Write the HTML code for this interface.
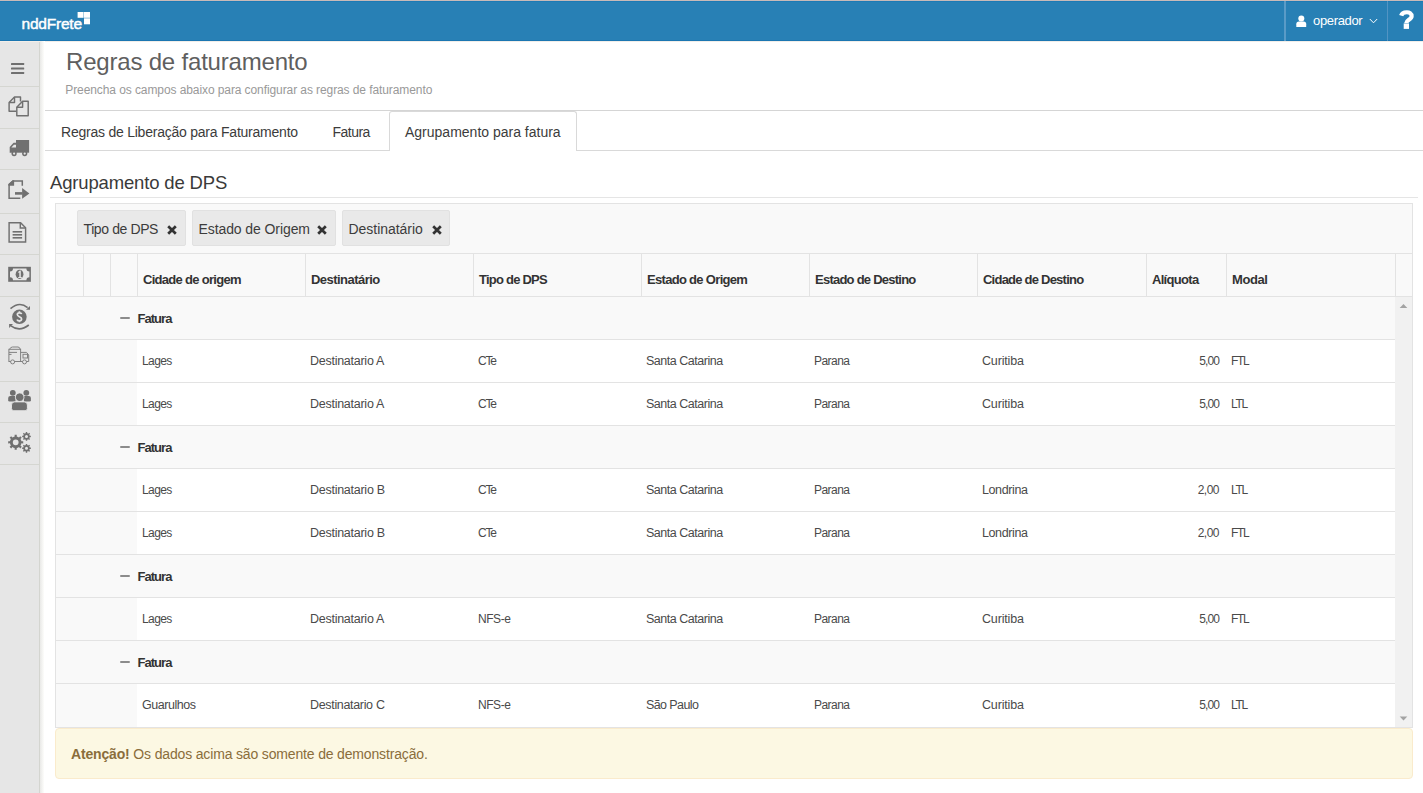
<!DOCTYPE html>
<html><head><meta charset="utf-8"><title>Regras de faturamento</title>
<style>
html,body{margin:0;padding:0;}
body{width:1423px;height:793px;overflow:hidden;position:relative;background:#fff;font-family:"Liberation Sans", sans-serif;}
</style></head><body>
<div style="position:absolute;left:0px;top:0px;width:1423px;height:1px;background:#c8bab8;"></div>
<div style="position:absolute;left:0px;top:1px;width:1423px;height:40px;background:#2880b5;"></div>
<div style="position:absolute;left:0px;top:1px;width:1423px;height:1px;background:#1c7ab5;"></div>
<div style="position:absolute;left:0px;top:40px;width:1423px;height:1px;background:#1b76b1;"></div>
<div style="position:absolute;left:1284px;top:1px;width:2px;height:40px;background:#5a9bc7;"></div>
<div style="position:absolute;left:1387px;top:1px;width:1px;height:40px;background:#5294c3;"></div>
<div style="position:absolute;left:21.5px;top:15.98px;font-size:15.5px;line-height:15.5px;font-weight:normal;color:#fff;letter-spacing:-0.22px;white-space:nowrap;-webkit-text-stroke:0.45px #fff;">nddFrete</div>
<svg style="position:absolute;left:0;top:0" width="1423" height="41" viewBox="0 0 1423 41">
<rect x="77.6" y="12" width="6" height="5.8" fill="#fff"/>
<rect x="84" y="12" width="6" height="5.8" fill="#fff"/>
<rect x="84" y="18.3" width="6" height="6" fill="#fff"/>
<circle cx="1301.3" cy="18.4" r="3" fill="#fff"/>
<path d="M1296.3,27.1 L1296.3,24.3 Q1296.3,21.6 1299,21.6 L1303.6,21.6 Q1306.2,21.6 1306.2,24.3 L1306.2,27.1 Z" fill="#fff"/>
<polyline points="1369.8,19 1373.5,22.8 1377.2,19" fill="none" stroke="#fff" stroke-width="1"/>
<path d="M1401.2,15.6 C1402.3,11.5 1411.6,10.6 1411.6,16.2 C1411.6,19.6 1406.3,19.8 1406.3,23" fill="none" stroke="#fff" stroke-width="4.2"/>
<rect x="1403.7" y="23.4" width="5.3" height="5.5" fill="#fff"/>
</svg>
<div style="position:absolute;left:1313px;top:14.00px;font-size:13px;line-height:13px;font-weight:normal;color:#fff;letter-spacing:-0.34px;white-space:nowrap;">operador</div>
<div style="position:absolute;left:0px;top:41px;width:39px;height:752px;background:#e6e6e6;"></div>
<div style="position:absolute;left:39px;top:41px;width:1px;height:752px;background:#d4d5d0;"></div>
<div style="position:absolute;left:40px;top:41px;width:4px;height:752px;background:linear-gradient(to right,#e9e9e7,#fdfdfb)"></div>
<div style="position:absolute;left:0px;top:86px;width:39px;height:1px;background:#d5d6d1;"></div>
<div style="position:absolute;left:0px;top:128px;width:39px;height:1px;background:#d5d6d1;"></div>
<div style="position:absolute;left:0px;top:169px;width:39px;height:1px;background:#d5d6d1;"></div>
<div style="position:absolute;left:0px;top:213px;width:39px;height:1px;background:#d5d6d1;"></div>
<div style="position:absolute;left:0px;top:254px;width:39px;height:1px;background:#d5d6d1;"></div>
<div style="position:absolute;left:0px;top:296px;width:39px;height:1px;background:#d5d6d1;"></div>
<div style="position:absolute;left:0px;top:338px;width:39px;height:1px;background:#d5d6d1;"></div>
<div style="position:absolute;left:0px;top:381px;width:39px;height:1px;background:#d5d6d1;"></div>
<div style="position:absolute;left:0px;top:422px;width:39px;height:1px;background:#d5d6d1;"></div>
<div style="position:absolute;left:0px;top:464px;width:39px;height:1px;background:#d5d6d1;"></div>
<div style="position:absolute;left:0px;top:41px;width:40px;height:1px;background:#f2eee9;"></div>
<div style="position:absolute;left:45px;top:41px;width:1378px;height:1px;background:#f2eee9;"></div>
<svg style="position:absolute;left:0;top:0" width="40" height="793" viewBox="0 0 40 793">
<g fill="#707070">
<rect x="11" y="63" width="13.2" height="2" rx="0.6"/>
<rect x="11" y="67.5" width="13.2" height="2" rx="0.6"/>
<rect x="11" y="72" width="13.2" height="2" rx="0.6"/>
</g>
<g fill="none" stroke="#707070" stroke-width="1.45" stroke-linejoin="round">
<path d="M16.5,111.3 L9.1,111.3 L9.1,102.5 L14.5,96.9 L20.5,96.9 L20.5,101.5"/>
<path d="M14.5,96.9 L14.5,102.5 L9.1,102.5"/>
<path d="M16.8,107.3 L22.6,101.3 L28.2,101.3 L28.2,115.8 L16.8,115.8 Z" fill="#e6e6e6"/>
<path d="M22.6,101.3 L22.6,107.3 L16.8,107.3"/>
</g>
<g fill="#707070">
<rect x="16" y="140" width="13.1" height="12.7"/>
<path d="M9.7,152.7 L9.7,147 L13.6,142.8 L16.5,142.8 L16.5,152.7 Z"/>
<path d="M11.4,147.4 L13.9,144.7 L16,144.7 L16,147.4 Z" fill="#e6e6e6"/>
<circle cx="14.1" cy="153.6" r="2.6"/>
<circle cx="24.7" cy="153.6" r="2.6"/>
<circle cx="14.1" cy="153.6" r="1.1" fill="#e6e6e6"/>
<circle cx="24.7" cy="153.6" r="1.1" fill="#e6e6e6"/>
</g>
<g fill="none" stroke="#707070" stroke-width="1.5">
<path d="M20.3,198.2 L9.1,198.2 L9.1,184.3 L13.1,180.9 L22.3,180.9 L22.3,185.7"/>
</g>
<g fill="#707070">
<path d="M8.4,185.7 L8.4,184.2 L12.6,180.2 L14.1,180.2 L14.1,185.7 Z"/>
<rect x="15" y="192.1" width="7.5" height="2.6"/>
<path d="M22.1,188.1 L29.4,193.4 L22.1,198.7 Z"/>
</g>
<g fill="none" stroke="#707070" stroke-width="1.45">
<path d="M9.1,222.7 L20.6,222.7 L25.6,227.7 L25.6,242 L9.1,242 Z"/>
<path d="M20.3,222.7 L20.3,228 L25.6,228"/>
</g>
<g fill="#707070">
<rect x="12.6" y="231" width="9.5" height="1.6"/>
<rect x="12.6" y="234" width="9.5" height="1.6"/>
<rect x="12.6" y="237" width="9.5" height="1.6"/>
</g>
<g fill="#707070">
<rect x="8.2" y="266.8" width="22.7" height="15"/>
<path d="M13.0,268.5 L26.4,268.5 A3.0,3.0 0 0 0 29.4,271.5 L29.4,277.3 A3.0,3.0 0 0 0 26.4,280.3 L13.0,280.3 A3.0,3.0 0 0 0 10.0,277.3 L10.0,271.5 A3.0,3.0 0 0 0 13.0,268.5 Z" fill="#e6e6e6"/>
<ellipse cx="19.55" cy="274.3" rx="3.9" ry="4.6"/>
<path d="M18.3,271.8 L19.9,270.6 L20.8,270.6 L20.8,277 L21.8,277 L21.8,278 L18.2,278 L18.2,277 L19.3,277 L19.3,272.6 L18.3,273 Z" fill="#e6e6e6"/>
</g>
<g fill="#707070">
<circle cx="19.4" cy="316.8" r="7.3"/>
<path d="M21.6,314.2 C21.3,312.6 17.3,312.3 17.3,314.6 C17.3,317 21.6,316.4 21.6,319 C21.6,321.4 17.4,321.3 17.1,319.5 M19.4,311.3 L19.4,312.8 M19.4,320.8 L19.4,322.3" fill="none" stroke="#e6e6e6" stroke-width="1.7"/>
<path d="M10.5,308.7 Q19.5,300.9 27.6,307.6" fill="none" stroke="#707070" stroke-width="1.6"/>
<path d="M30,305.9 L30,309.8 L26,309.8 Z"/>
<path d="M28.8,325 Q19.5,332.3 11,325.8" fill="none" stroke="#707070" stroke-width="1.6"/>
<path d="M9.1,324 L13,324 L9.1,327.9 Z"/>
</g>
<g fill="none" stroke="#707070" stroke-width="1" opacity="0.85">
<rect x="8.9" y="349.3" width="11.7" height="12.2"/>
<path d="M9.5,349.3 Q10.5,347 12.5,347 L18,347 Q19.6,347 20.3,349.3"/>
<path d="M9,352.4 L17,352.4 M9,354.4 L11.5,354.4"/>
<path d="M20.6,352.4 L26.5,352.4 L28.7,355 L28.7,361.5 L20.6,361.5"/>
<rect x="23" y="354.3" width="4.5" height="3.7"/>
<circle cx="12.6" cy="361.9" r="2" fill="#e6e6e6"/>
<circle cx="24.5" cy="361.9" r="2" fill="#e6e6e6"/>
</g>
<g fill="#707070">
<circle cx="12.8" cy="392.8" r="2.9"/>
<circle cx="26.3" cy="392.8" r="2.9"/>
<path d="M8.2,400.2 L8.2,398 Q8.2,395.9 10.3,395.9 L15.5,395.9 L15.5,401.6 L9.6,401.6 Q8.2,401.6 8.2,400.2 Z"/>
<path d="M30.9,400.2 L30.9,398 Q30.9,395.9 28.8,395.9 L23.9,395.9 L23.9,401.6 L29.5,401.6 Q30.9,401.6 30.9,400.2 Z"/>
<circle cx="19.7" cy="397.2" r="4.3" stroke="#e6e6e6" stroke-width="0.9"/>
<path d="M11.5,408.4 L11.5,405 Q11.5,401.9 14.5,401.9 L24.4,401.9 Q27.4,401.9 27.4,405 L27.4,408.4 Q27.4,410.7 25.1,410.7 L13.8,410.7 Q11.5,410.7 11.5,408.4 Z" stroke="#e6e6e6" stroke-width="0.9"/>
</g>
<g fill="#707070" fill-rule="evenodd">
<path d="M21.06,440.08 L21.41,441.26 L23.22,441.21 L23.22,443.39 L21.41,443.34 L21.06,444.52 L20.47,445.60 L21.79,446.85 L20.25,448.39 L19.00,447.07 L17.92,447.66 L16.74,448.01 L16.79,449.82 L14.61,449.82 L14.66,448.01 L13.48,447.66 L12.40,447.07 L11.15,448.39 L9.61,446.85 L10.93,445.60 L10.34,444.52 L9.99,443.34 L8.18,443.39 L8.18,441.21 L9.99,441.26 L10.34,440.08 L10.93,439.00 L9.61,437.75 L11.15,436.21 L12.40,437.53 L13.48,436.94 L14.66,436.59 L14.61,434.78 L16.79,434.78 L16.74,436.59 L17.92,436.94 L19.00,437.53 L20.25,436.21 L21.79,437.75 L20.47,439.00 Z M18.6,442.3 A2.9,2.9 0 1,0 12.8,442.3 A2.9,2.9 0 1,0 18.6,442.3 Z"/>
<path d="M29.55,435.14 L29.73,435.71 L30.84,435.66 L30.84,437.14 L29.73,437.09 L29.55,437.66 L29.27,438.20 L30.09,438.95 L29.05,439.99 L28.30,439.17 L27.76,439.45 L27.19,439.63 L27.24,440.74 L25.76,440.74 L25.81,439.63 L25.24,439.45 L24.70,439.17 L23.95,439.99 L22.91,438.95 L23.73,438.20 L23.45,437.66 L23.27,437.09 L22.16,437.14 L22.16,435.66 L23.27,435.71 L23.45,435.14 L23.73,434.60 L22.91,433.85 L23.95,432.81 L24.70,433.63 L25.24,433.35 L25.81,433.17 L25.76,432.06 L27.24,432.06 L27.19,433.17 L27.76,433.35 L28.30,433.63 L29.05,432.81 L30.09,433.85 L29.27,434.60 Z M28.0,436.4 A1.5,1.5 0 1,0 25.0,436.4 A1.5,1.5 0 1,0 28.0,436.4 Z"/>
<path d="M29.55,447.04 L29.73,447.61 L30.84,447.56 L30.84,449.04 L29.73,448.99 L29.55,449.56 L29.27,450.10 L30.09,450.85 L29.05,451.89 L28.30,451.07 L27.76,451.35 L27.19,451.53 L27.24,452.64 L25.76,452.64 L25.81,451.53 L25.24,451.35 L24.70,451.07 L23.95,451.89 L22.91,450.85 L23.73,450.10 L23.45,449.56 L23.27,448.99 L22.16,449.04 L22.16,447.56 L23.27,447.61 L23.45,447.04 L23.73,446.50 L22.91,445.75 L23.95,444.71 L24.70,445.53 L25.24,445.25 L25.81,445.07 L25.76,443.96 L27.24,443.96 L27.19,445.07 L27.76,445.25 L28.30,445.53 L29.05,444.71 L30.09,445.75 L29.27,446.50 Z M28.0,448.3 A1.5,1.5 0 1,0 25.0,448.3 A1.5,1.5 0 1,0 28.0,448.3 Z"/>
</g>
</svg>
<div style="position:absolute;left:66px;top:49.68px;font-size:24px;line-height:24px;font-weight:normal;color:#5f5f5f;letter-spacing:-0.19px;white-space:nowrap;">Regras de faturamento</div>
<div style="position:absolute;left:65.3px;top:83.84px;font-size:12px;line-height:12px;font-weight:normal;color:#999;letter-spacing:-0.09px;white-space:nowrap;">Preencha os campos abaixo para configurar as regras de faturamento</div>
<div style="position:absolute;left:45px;top:110px;width:1378px;height:1px;background:#d5d5d5;"></div>
<div style="position:absolute;left:45px;top:150px;width:1378px;height:1px;background:#d9d9d9;"></div>
<div style="position:absolute;left:389px;top:111px;width:188px;height:40px;background:#fff;border:1px solid #d9d9d9;border-bottom:none;border-radius:3px 3px 0 0;box-sizing:border-box"></div>
<div style="position:absolute;left:61px;top:125.15px;font-size:14px;line-height:14px;font-weight:normal;color:#3c3c3c;letter-spacing:-0.23px;white-space:nowrap;">Regras de Liberação para Faturamento</div>
<div style="position:absolute;left:332.5px;top:125.15px;font-size:14px;line-height:14px;font-weight:normal;color:#3c3c3c;letter-spacing:-0.52px;white-space:nowrap;">Fatura</div>
<div style="position:absolute;left:405px;top:125.15px;font-size:14px;line-height:14px;font-weight:normal;color:#3c3c3c;letter-spacing:0.0px;white-space:nowrap;">Agrupamento para fatura</div>
<div style="position:absolute;left:50px;top:173.74px;font-size:18.5px;line-height:18.5px;font-weight:normal;color:#3a3a3a;letter-spacing:-0.16px;white-space:nowrap;">Agrupamento de DPS</div>
<div style="position:absolute;left:50px;top:197px;width:1368px;height:1px;background:#e5e5e5;"></div>
<div style="position:absolute;left:55px;top:203px;width:1358px;height:525px;box-sizing:border-box;border:1px solid #e3e3e3;background:#f9f9f9"></div>
<div style="position:absolute;left:77px;top:210px;width:109px;height:36px;box-sizing:border-box;background:#e9e9e9;border:1px solid #e1e1e1;border-radius:2px"></div>
<div style="position:absolute;left:83.5px;top:222.15px;font-size:14px;line-height:14px;font-weight:normal;color:#3c3c3c;letter-spacing:-0.39px;white-space:nowrap;">Tipo de DPS</div>
<svg style="position:absolute;left:167.2px;top:225.4px" width="10" height="10" viewBox="0 0 10 10"><path d="M1.2,1.2 L8.8,8.8 M8.8,1.2 L1.2,8.8" stroke="#333" stroke-width="2.7" stroke-linecap="butt"/></svg>
<div style="position:absolute;left:192px;top:210px;width:144px;height:36px;box-sizing:border-box;background:#e9e9e9;border:1px solid #e1e1e1;border-radius:2px"></div>
<div style="position:absolute;left:198.5px;top:222.15px;font-size:14px;line-height:14px;font-weight:normal;color:#3c3c3c;letter-spacing:-0.09px;white-space:nowrap;">Estado de Origem</div>
<svg style="position:absolute;left:317.4px;top:225.4px" width="10" height="10" viewBox="0 0 10 10"><path d="M1.2,1.2 L8.8,8.8 M8.8,1.2 L1.2,8.8" stroke="#333" stroke-width="2.7" stroke-linecap="butt"/></svg>
<div style="position:absolute;left:342px;top:210px;width:108px;height:36px;box-sizing:border-box;background:#e9e9e9;border:1px solid #e1e1e1;border-radius:2px"></div>
<div style="position:absolute;left:348.5px;top:222.15px;font-size:14px;line-height:14px;font-weight:normal;color:#3c3c3c;letter-spacing:-0.04px;white-space:nowrap;">Destinatário</div>
<svg style="position:absolute;left:431.59999999999997px;top:225.4px" width="10" height="10" viewBox="0 0 10 10"><path d="M1.2,1.2 L8.8,8.8 M8.8,1.2 L1.2,8.8" stroke="#333" stroke-width="2.7" stroke-linecap="butt"/></svg>
<div style="position:absolute;left:56px;top:253px;width:1356px;height:1px;background:#e3e3e3;"></div>
<div style="position:absolute;left:56px;top:296px;width:1356px;height:1px;background:#e3e3e3;"></div>
<div style="position:absolute;left:83px;top:254px;width:1px;height:42px;background:#e3e3e3;"></div>
<div style="position:absolute;left:110px;top:254px;width:1px;height:42px;background:#e3e3e3;"></div>
<div style="position:absolute;left:137px;top:254px;width:1px;height:42px;background:#e3e3e3;"></div>
<div style="position:absolute;left:305px;top:254px;width:1px;height:42px;background:#e3e3e3;"></div>
<div style="position:absolute;left:473px;top:254px;width:1px;height:42px;background:#e3e3e3;"></div>
<div style="position:absolute;left:641px;top:254px;width:1px;height:42px;background:#e3e3e3;"></div>
<div style="position:absolute;left:809px;top:254px;width:1px;height:42px;background:#e3e3e3;"></div>
<div style="position:absolute;left:977px;top:254px;width:1px;height:42px;background:#e3e3e3;"></div>
<div style="position:absolute;left:1146px;top:254px;width:1px;height:42px;background:#e3e3e3;"></div>
<div style="position:absolute;left:1226px;top:254px;width:1px;height:42px;background:#e3e3e3;"></div>
<div style="position:absolute;left:1395px;top:254px;width:1px;height:42px;background:#e3e3e3;"></div>
<div style="position:absolute;left:143px;top:273.40px;font-size:13px;line-height:13px;font-weight:bold;color:#333;letter-spacing:-0.7px;white-space:nowrap;">Cidade de origem</div>
<div style="position:absolute;left:311px;top:273.40px;font-size:13px;line-height:13px;font-weight:bold;color:#333;letter-spacing:-0.54px;white-space:nowrap;">Destinatário</div>
<div style="position:absolute;left:479px;top:273.40px;font-size:13px;line-height:13px;font-weight:bold;color:#333;letter-spacing:-0.77px;white-space:nowrap;">Tipo de DPS</div>
<div style="position:absolute;left:647px;top:273.40px;font-size:13px;line-height:13px;font-weight:bold;color:#333;letter-spacing:-0.69px;white-space:nowrap;">Estado de Origem</div>
<div style="position:absolute;left:815px;top:273.40px;font-size:13px;line-height:13px;font-weight:bold;color:#333;letter-spacing:-0.76px;white-space:nowrap;">Estado de Destino</div>
<div style="position:absolute;left:983px;top:273.40px;font-size:13px;line-height:13px;font-weight:bold;color:#333;letter-spacing:-0.77px;white-space:nowrap;">Cidade de Destino</div>
<div style="position:absolute;left:1152px;top:273.40px;font-size:13px;line-height:13px;font-weight:bold;color:#333;letter-spacing:-0.69px;white-space:nowrap;">Alíquota</div>
<div style="position:absolute;left:1232px;top:273.40px;font-size:13px;line-height:13px;font-weight:bold;color:#333;letter-spacing:-0.4px;white-space:nowrap;">Modal</div>
<div style="position:absolute;left:1395px;top:297px;width:17px;height:430px;background:#f1f1f1;"></div>
<div style="position:absolute;left:56px;top:297px;width:1339px;height:42px;background:#f9f9f9;"></div>
<div style="position:absolute;left:120.3px;top:317.1px;width:9.3px;height:2.2px;background:#8c8c8c;border-radius:1px"></div>
<div style="position:absolute;left:137.5px;top:312.00px;font-size:13px;line-height:13px;font-weight:bold;color:#333;letter-spacing:-0.96px;white-space:nowrap;">Fatura</div>
<div style="position:absolute;left:56px;top:339px;width:1339px;height:1px;background:#e3e3e3;"></div>
<div style="position:absolute;left:56px;top:340px;width:81px;height:42px;background:#f9f9f9;"></div>
<div style="position:absolute;left:137px;top:340px;width:1258px;height:42px;background:#ffffff;"></div>
<div style="position:absolute;left:142px;top:355.34px;font-size:12px;line-height:12px;font-weight:normal;color:#4a4a4a;letter-spacing:-0.6px;white-space:nowrap;">Lages</div>
<div style="position:absolute;left:310px;top:355.42px;font-size:12.5px;line-height:12.5px;font-weight:normal;color:#4a4a4a;letter-spacing:-0.26px;white-space:nowrap;">Destinatario A</div>
<div style="position:absolute;left:478px;top:355.34px;font-size:12px;line-height:12px;font-weight:normal;color:#4a4a4a;letter-spacing:-1.15px;white-space:nowrap;">CTe</div>
<div style="position:absolute;left:646px;top:355.42px;font-size:12.5px;line-height:12.5px;font-weight:normal;color:#4a4a4a;letter-spacing:-0.48px;white-space:nowrap;">Santa Catarina</div>
<div style="position:absolute;left:814px;top:355.34px;font-size:12px;line-height:12px;font-weight:normal;color:#4a4a4a;letter-spacing:-0.54px;white-space:nowrap;">Parana</div>
<div style="position:absolute;left:982px;top:355.42px;font-size:12.5px;line-height:12.5px;font-weight:normal;color:#4a4a4a;letter-spacing:-0.17px;white-space:nowrap;">Curitiba</div>
<div style="position:absolute;left:1147px;width:72px;top:355.34px;font-size:12px;line-height:12px;color:#4a4a4a;text-align:right;letter-spacing:-0.93px;white-space:nowrap">5,00</div>
<div style="position:absolute;left:1231px;top:355.34px;font-size:12px;line-height:12px;font-weight:normal;color:#4a4a4a;letter-spacing:-1.3px;white-space:nowrap;">FTL</div>
<div style="position:absolute;left:56px;top:382px;width:1339px;height:1px;background:#e3e3e3;"></div>
<div style="position:absolute;left:56px;top:383px;width:81px;height:42px;background:#f9f9f9;"></div>
<div style="position:absolute;left:137px;top:383px;width:1258px;height:42px;background:#ffffff;"></div>
<div style="position:absolute;left:142px;top:398.34px;font-size:12px;line-height:12px;font-weight:normal;color:#4a4a4a;letter-spacing:-0.6px;white-space:nowrap;">Lages</div>
<div style="position:absolute;left:310px;top:398.42px;font-size:12.5px;line-height:12.5px;font-weight:normal;color:#4a4a4a;letter-spacing:-0.26px;white-space:nowrap;">Destinatario A</div>
<div style="position:absolute;left:478px;top:398.34px;font-size:12px;line-height:12px;font-weight:normal;color:#4a4a4a;letter-spacing:-1.15px;white-space:nowrap;">CTe</div>
<div style="position:absolute;left:646px;top:398.42px;font-size:12.5px;line-height:12.5px;font-weight:normal;color:#4a4a4a;letter-spacing:-0.48px;white-space:nowrap;">Santa Catarina</div>
<div style="position:absolute;left:814px;top:398.34px;font-size:12px;line-height:12px;font-weight:normal;color:#4a4a4a;letter-spacing:-0.54px;white-space:nowrap;">Parana</div>
<div style="position:absolute;left:982px;top:398.42px;font-size:12.5px;line-height:12.5px;font-weight:normal;color:#4a4a4a;letter-spacing:-0.17px;white-space:nowrap;">Curitiba</div>
<div style="position:absolute;left:1147px;width:72px;top:398.34px;font-size:12px;line-height:12px;color:#4a4a4a;text-align:right;letter-spacing:-0.93px;white-space:nowrap">5,00</div>
<div style="position:absolute;left:1231px;top:398.34px;font-size:12px;line-height:12px;font-weight:normal;color:#4a4a4a;letter-spacing:-1.3px;white-space:nowrap;">LTL</div>
<div style="position:absolute;left:56px;top:425px;width:1339px;height:1px;background:#e3e3e3;"></div>
<div style="position:absolute;left:56px;top:426px;width:1339px;height:42px;background:#f9f9f9;"></div>
<div style="position:absolute;left:120.3px;top:446.1px;width:9.3px;height:2.2px;background:#8c8c8c;border-radius:1px"></div>
<div style="position:absolute;left:137.5px;top:441.00px;font-size:13px;line-height:13px;font-weight:bold;color:#333;letter-spacing:-0.96px;white-space:nowrap;">Fatura</div>
<div style="position:absolute;left:56px;top:468px;width:1339px;height:1px;background:#e3e3e3;"></div>
<div style="position:absolute;left:56px;top:469px;width:81px;height:42px;background:#f9f9f9;"></div>
<div style="position:absolute;left:137px;top:469px;width:1258px;height:42px;background:#ffffff;"></div>
<div style="position:absolute;left:142px;top:484.34px;font-size:12px;line-height:12px;font-weight:normal;color:#4a4a4a;letter-spacing:-0.6px;white-space:nowrap;">Lages</div>
<div style="position:absolute;left:310px;top:484.42px;font-size:12.5px;line-height:12.5px;font-weight:normal;color:#4a4a4a;letter-spacing:-0.26px;white-space:nowrap;">Destinatario B</div>
<div style="position:absolute;left:478px;top:484.34px;font-size:12px;line-height:12px;font-weight:normal;color:#4a4a4a;letter-spacing:-1.15px;white-space:nowrap;">CTe</div>
<div style="position:absolute;left:646px;top:484.42px;font-size:12.5px;line-height:12.5px;font-weight:normal;color:#4a4a4a;letter-spacing:-0.48px;white-space:nowrap;">Santa Catarina</div>
<div style="position:absolute;left:814px;top:484.34px;font-size:12px;line-height:12px;font-weight:normal;color:#4a4a4a;letter-spacing:-0.54px;white-space:nowrap;">Parana</div>
<div style="position:absolute;left:982px;top:484.42px;font-size:12.5px;line-height:12.5px;font-weight:normal;color:#4a4a4a;letter-spacing:-0.39px;white-space:nowrap;">Londrina</div>
<div style="position:absolute;left:1147px;width:72px;top:484.34px;font-size:12px;line-height:12px;color:#4a4a4a;text-align:right;letter-spacing:-0.5px;white-space:nowrap">2,00</div>
<div style="position:absolute;left:1231px;top:484.34px;font-size:12px;line-height:12px;font-weight:normal;color:#4a4a4a;letter-spacing:-1.3px;white-space:nowrap;">LTL</div>
<div style="position:absolute;left:56px;top:511px;width:1339px;height:1px;background:#e3e3e3;"></div>
<div style="position:absolute;left:56px;top:512px;width:81px;height:42px;background:#f9f9f9;"></div>
<div style="position:absolute;left:137px;top:512px;width:1258px;height:42px;background:#ffffff;"></div>
<div style="position:absolute;left:142px;top:527.34px;font-size:12px;line-height:12px;font-weight:normal;color:#4a4a4a;letter-spacing:-0.6px;white-space:nowrap;">Lages</div>
<div style="position:absolute;left:310px;top:527.42px;font-size:12.5px;line-height:12.5px;font-weight:normal;color:#4a4a4a;letter-spacing:-0.26px;white-space:nowrap;">Destinatario B</div>
<div style="position:absolute;left:478px;top:527.34px;font-size:12px;line-height:12px;font-weight:normal;color:#4a4a4a;letter-spacing:-1.15px;white-space:nowrap;">CTe</div>
<div style="position:absolute;left:646px;top:527.42px;font-size:12.5px;line-height:12.5px;font-weight:normal;color:#4a4a4a;letter-spacing:-0.48px;white-space:nowrap;">Santa Catarina</div>
<div style="position:absolute;left:814px;top:527.34px;font-size:12px;line-height:12px;font-weight:normal;color:#4a4a4a;letter-spacing:-0.54px;white-space:nowrap;">Parana</div>
<div style="position:absolute;left:982px;top:527.42px;font-size:12.5px;line-height:12.5px;font-weight:normal;color:#4a4a4a;letter-spacing:-0.39px;white-space:nowrap;">Londrina</div>
<div style="position:absolute;left:1147px;width:72px;top:527.34px;font-size:12px;line-height:12px;color:#4a4a4a;text-align:right;letter-spacing:-0.5px;white-space:nowrap">2,00</div>
<div style="position:absolute;left:1231px;top:527.34px;font-size:12px;line-height:12px;font-weight:normal;color:#4a4a4a;letter-spacing:-1.3px;white-space:nowrap;">FTL</div>
<div style="position:absolute;left:56px;top:554px;width:1339px;height:1px;background:#e3e3e3;"></div>
<div style="position:absolute;left:56px;top:555px;width:1339px;height:42px;background:#f9f9f9;"></div>
<div style="position:absolute;left:120.3px;top:575.1px;width:9.3px;height:2.2px;background:#8c8c8c;border-radius:1px"></div>
<div style="position:absolute;left:137.5px;top:570.00px;font-size:13px;line-height:13px;font-weight:bold;color:#333;letter-spacing:-0.96px;white-space:nowrap;">Fatura</div>
<div style="position:absolute;left:56px;top:597px;width:1339px;height:1px;background:#e3e3e3;"></div>
<div style="position:absolute;left:56px;top:598px;width:81px;height:42px;background:#f9f9f9;"></div>
<div style="position:absolute;left:137px;top:598px;width:1258px;height:42px;background:#ffffff;"></div>
<div style="position:absolute;left:142px;top:613.34px;font-size:12px;line-height:12px;font-weight:normal;color:#4a4a4a;letter-spacing:-0.6px;white-space:nowrap;">Lages</div>
<div style="position:absolute;left:310px;top:613.42px;font-size:12.5px;line-height:12.5px;font-weight:normal;color:#4a4a4a;letter-spacing:-0.26px;white-space:nowrap;">Destinatario A</div>
<div style="position:absolute;left:478px;top:613.34px;font-size:12px;line-height:12px;font-weight:normal;color:#4a4a4a;letter-spacing:-0.45px;white-space:nowrap;">NFS-e</div>
<div style="position:absolute;left:646px;top:613.42px;font-size:12.5px;line-height:12.5px;font-weight:normal;color:#4a4a4a;letter-spacing:-0.48px;white-space:nowrap;">Santa Catarina</div>
<div style="position:absolute;left:814px;top:613.34px;font-size:12px;line-height:12px;font-weight:normal;color:#4a4a4a;letter-spacing:-0.54px;white-space:nowrap;">Parana</div>
<div style="position:absolute;left:982px;top:613.42px;font-size:12.5px;line-height:12.5px;font-weight:normal;color:#4a4a4a;letter-spacing:-0.17px;white-space:nowrap;">Curitiba</div>
<div style="position:absolute;left:1147px;width:72px;top:613.34px;font-size:12px;line-height:12px;color:#4a4a4a;text-align:right;letter-spacing:-0.93px;white-space:nowrap">5,00</div>
<div style="position:absolute;left:1231px;top:613.34px;font-size:12px;line-height:12px;font-weight:normal;color:#4a4a4a;letter-spacing:-1.3px;white-space:nowrap;">FTL</div>
<div style="position:absolute;left:56px;top:640px;width:1339px;height:1px;background:#e3e3e3;"></div>
<div style="position:absolute;left:56px;top:641px;width:1339px;height:42px;background:#f9f9f9;"></div>
<div style="position:absolute;left:120.3px;top:661.1px;width:9.3px;height:2.2px;background:#8c8c8c;border-radius:1px"></div>
<div style="position:absolute;left:137.5px;top:656.00px;font-size:13px;line-height:13px;font-weight:bold;color:#333;letter-spacing:-0.96px;white-space:nowrap;">Fatura</div>
<div style="position:absolute;left:56px;top:683px;width:1339px;height:1px;background:#e3e3e3;"></div>
<div style="position:absolute;left:56px;top:684px;width:81px;height:43px;background:#f9f9f9;"></div>
<div style="position:absolute;left:137px;top:684px;width:1258px;height:43px;background:#ffffff;"></div>
<div style="position:absolute;left:142px;top:699.42px;font-size:12.5px;line-height:12.5px;font-weight:normal;color:#4a4a4a;letter-spacing:-0.47px;white-space:nowrap;">Guarulhos</div>
<div style="position:absolute;left:310px;top:699.42px;font-size:12.5px;line-height:12.5px;font-weight:normal;color:#4a4a4a;letter-spacing:-0.33px;white-space:nowrap;">Destinatario C</div>
<div style="position:absolute;left:478px;top:699.34px;font-size:12px;line-height:12px;font-weight:normal;color:#4a4a4a;letter-spacing:-0.45px;white-space:nowrap;">NFS-e</div>
<div style="position:absolute;left:646px;top:699.42px;font-size:12.5px;line-height:12.5px;font-weight:normal;color:#4a4a4a;letter-spacing:-0.6px;white-space:nowrap;">São Paulo</div>
<div style="position:absolute;left:814px;top:699.34px;font-size:12px;line-height:12px;font-weight:normal;color:#4a4a4a;letter-spacing:-0.54px;white-space:nowrap;">Parana</div>
<div style="position:absolute;left:982px;top:699.42px;font-size:12.5px;line-height:12.5px;font-weight:normal;color:#4a4a4a;letter-spacing:-0.17px;white-space:nowrap;">Curitiba</div>
<div style="position:absolute;left:1147px;width:72px;top:699.34px;font-size:12px;line-height:12px;color:#4a4a4a;text-align:right;letter-spacing:-0.93px;white-space:nowrap">5,00</div>
<div style="position:absolute;left:1231px;top:699.34px;font-size:12px;line-height:12px;font-weight:normal;color:#4a4a4a;letter-spacing:-1.3px;white-space:nowrap;">LTL</div>
<svg style="position:absolute;left:1395px;top:297px" width="17" height="430" viewBox="0 0 17 430"><path d="M4.7,11 L8.5,7 L12.3,11 Z" fill="#a3a3a3"/><path d="M4.7,419.5 L8.5,423.5 L12.3,419.5 Z" fill="#a3a3a3"/></svg>
<div style="position:absolute;left:55px;top:728px;width:1358px;height:51px;box-sizing:border-box;background:#fcf8e3;border:1px solid #faebcc;border-radius:4px"></div>
<div style="position:absolute;left:71px;top:747.15px;font-size:14px;line-height:14px;font-weight:normal;color:#8a6d3b;letter-spacing:-0.16px;white-space:nowrap;"><b>Atenção!</b> Os dados acima são somente de demonstração.</div>
</body></html>
